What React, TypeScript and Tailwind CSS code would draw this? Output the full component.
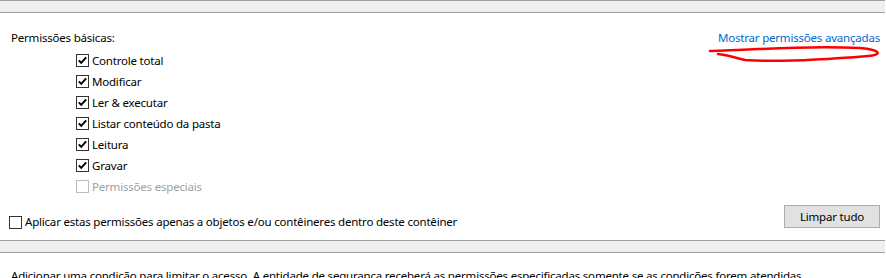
import React from 'react';

const perms = [
  'Controle total',
  'Modificar',
  'Ler & executar',
  'Listar conteúdo da pasta',
  'Leitura',
  'Gravar',
];

const Check = ({ checked, disabled }: { checked?: boolean; disabled?: boolean }) => (
  <div
    className={
      'w-[13px] h-[13px] shrink-0 border bg-white flex items-center justify-center ' +
      (disabled ? 'border-[#bcbcbc]' : 'border-[#333333]')
    }
  >
    {checked && (
      <svg width="11" height="11" viewBox="0 0 11 11">
        <path d="M1.8 5.4 L4.2 7.9 L9.2 2.4" fill="none" stroke="#000" strokeWidth="2" />
      </svg>
    )}
  </div>
);

const Band = () => (
  <div className="w-[885px] h-[13px] bg-[#f0f0f0] border-y border-[#a0a0a0]" />
);

export default function App() {
  return (
    <div
      className="relative w-[886px] h-[278px] overflow-hidden bg-white text-[11.5px] tracking-[-0.2px] text-black"
      style={{ fontFamily: '"Noto Sans", "Segoe UI", sans-serif' }}
    >
      <Band />

      <div className="flex justify-between items-center h-[16px] mt-[17px] pl-[11px] pr-[6px]">
        <span className="leading-[16px]">Permissões básicas:</span>
        <span className="leading-[16px] text-[#0066cc]">Mostrar permissões avançadas</span>
      </div>

      <div className="mt-[4px] pl-[76px] flex flex-col">
        {perms.map(p => (
          <div key={p} className="h-[21px] flex items-center gap-[3px]">
            <Check checked />
            <span className="leading-[16px]">{p}</span>
          </div>
        ))}
        <div className="h-[21px] flex items-center gap-[3px]">
          <Check disabled />
          <span className="leading-[16px] text-[#a0a0a0]">Permissões especiais</span>
        </div>
      </div>

      <div className="mt-[8px] h-[23px] flex items-start justify-between pl-[9px] pr-[6px]">
        <div className="pt-[9px] flex items-center gap-[3px]">
          <Check />
          <span className="leading-[16px]">
            Aplicar estas permissões apenas a objetos e/ou contêineres dentro deste contêiner
          </span>
        </div>
        <button className="w-[96px] h-[23px] bg-[#e1e1e1] border border-[#adadad] leading-[16px]">
          Limpar tudo
        </button>
      </div>

      <div className="mt-[12px]">
        <Band />
      </div>

      <div className="mt-[15px] pl-[11px] whitespace-nowrap leading-[16px]">
        Adicionar uma condição para limitar o acesso. A entidade de segurança receberá as permissões especificadas somente se as condições forem atendidas.
      </div>

      <svg className="absolute left-0 top-0 pointer-events-none" width="886" height="278">
        <path
          d="M710 51 C 760 50, 800 45, 860 48 C 882 50, 882 55, 868 56 C 820 60, 775 62, 745 60 C 735 58, 730 55, 718 54"
          fill="none"
          stroke="#ff0000"
          strokeWidth="2.5"
          strokeLinecap="round"
        />
      </svg>
    </div>
  );
}
